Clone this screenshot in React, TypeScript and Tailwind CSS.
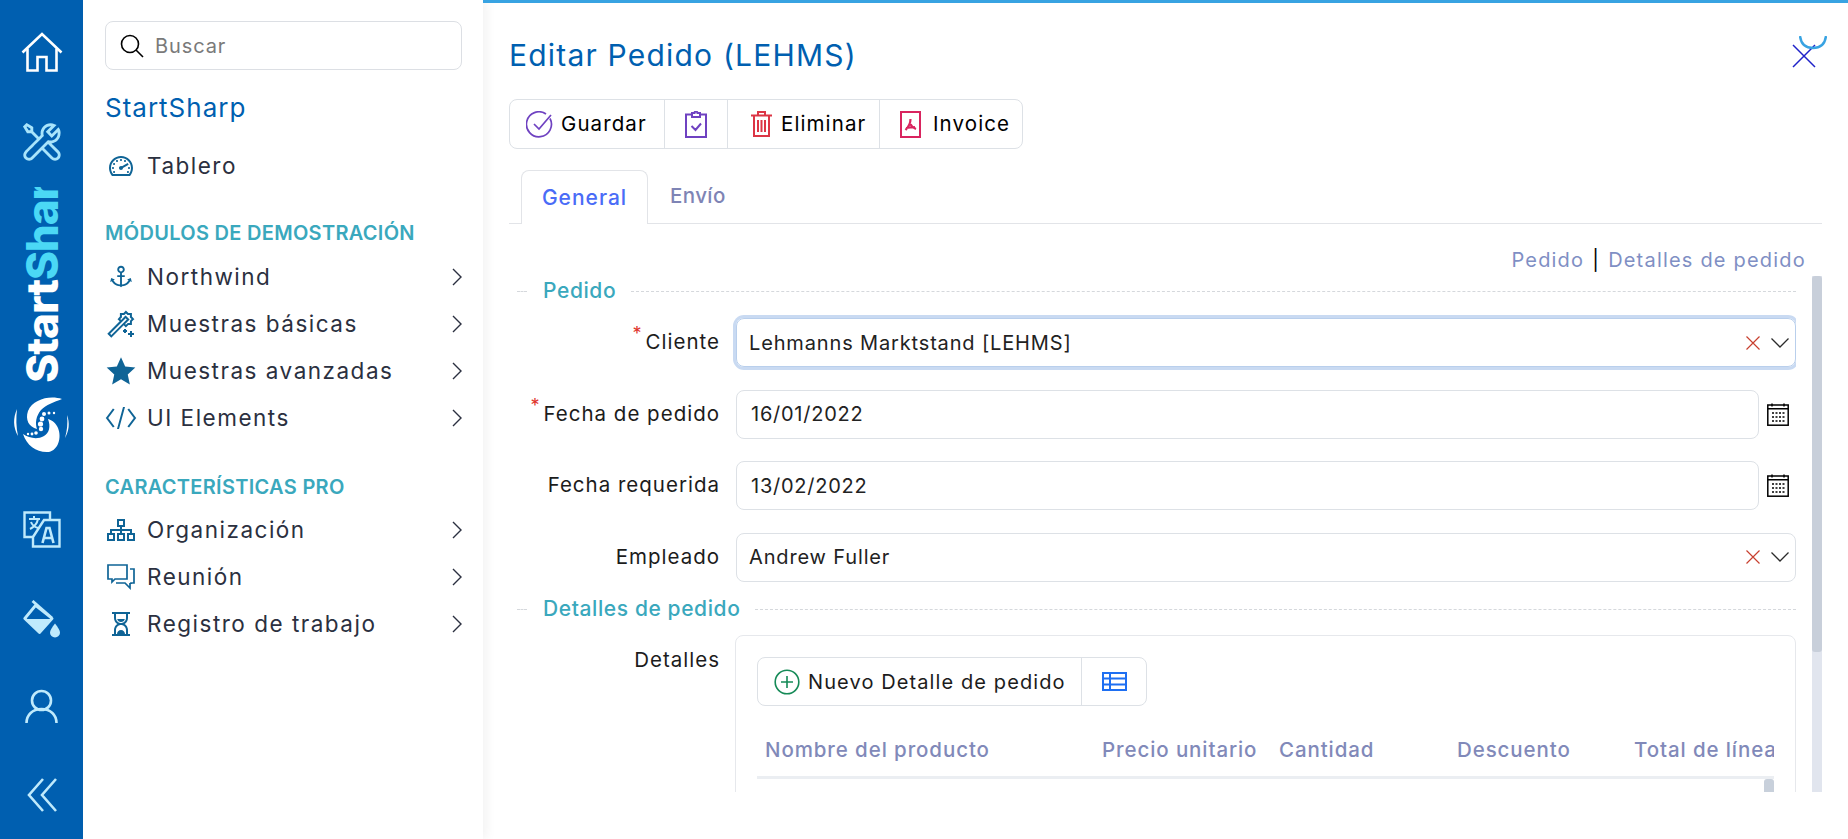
import {
  LiaAnchorSolid,
  LiaMagicSolid,
  LiaStarSolid,
  LiaCodeSolid,
  LiaSitemapSolid,
  LiaHourglassHalfSolid,
  LiaTachometerAltSolid,
  LiaToolsSolid,
} from "react-icons/lia";
import type { ReactNode } from "react";

const Chevron = () => (
  <svg width="10" height="18" viewBox="0 0 10 18" fill="none" stroke="#2b3040" strokeWidth="1.4" className="shrink-0">
    <path d="M1 1l8 8-8 8" />
  </svg>
);

const Comments = () => (
  <svg width="28" height="26" viewBox="0 0 28 26" fill="none" stroke="#0f6496" strokeWidth="1.7">
    <path d="M1 1h19v14H8l-3 3v-3H1z" />
    <path d="M23 5h4v14h-3v1M9 19h9l5 5v-5" />
  </svg>
);

function MenuItem({ icon, label, arrow = true }: { icon: ReactNode; label: string; arrow?: boolean }) {
  return (
    <div className="flex h-[47px] items-center">
      <div className="flex w-[32px] justify-center text-[#0f6496]">{icon}</div>
      <span className="ml-[10px] flex-1 text-[22.500px] tracking-[1.500px] text-[#2b3040]">{label}</span>
      {arrow && <Chevron />}
    </div>
  );
}

function Rail() {
  return (
    <aside className="flex h-full w-[83px] shrink-0 flex-col items-center bg-[#005fb0]">
      <svg width="42" height="40" viewBox="0 0 42 40" fill="none" stroke="#fff" strokeWidth="2.6" className="mt-[32px]">
        <path d="M1.5 20.5L21 2l19.5 18.5" />
        <path d="M6.5 16.5V38.5h10V25h9v13.5h10V16.5" />
      </svg>
      <LiaToolsSolid size={46} color="#a8e4fb" className="mt-[47px]" />
      <div className="mt-[22px] flex h-[196px] flex-col justify-end overflow-hidden">
        <div className="rotate-180 whitespace-nowrap text-[44px] font-extrabold leading-[46px] tracking-[-1.100px] [writing-mode:vertical-rl]">
          <span className="text-white">Start</span>
          <span className="text-[#4bd8f5]">Sharp</span>
        </div>
      </div>
      <svg width="64" height="66" viewBox="0 0 64 66" fill="#fff" className="mt-[8px]">
        <path d="M52 8C40 4 23 8 18 20c-3 9 1 16 9 18-2-6-1-13 4-19 5-5 13-8 21-11z" />
        <path d="M13 43c4 12 14 19 26 18 9-2 13-14 9-24-2-5-6-8-10-9 3 8 1 14-4 17-7 4-15 2-21-2z" />
        <path d="M7 18C3 27 3 36 8 45 6 36 6 27 7 18zM57 24c3 8 2 16-2 23 2-7 3-15 2-23z" />
        <circle cx="34" cy="23" r="2" />
        <circle cx="39" cy="22" r="1.500" />
        <circle cx="44" cy="22" r="1.200" />
        <circle cx="32" cy="28" r="2.400" />
        <circle cx="30.500" cy="33" r="2.600" />
        <circle cx="31" cy="38" r="2.200" />
        <circle cx="26" cy="42" r="1.800" />
        <circle cx="22" cy="43" r="1.400" />
        <circle cx="18" cy="43" r="1.200" />
      </svg>
      <svg width="38" height="37" viewBox="0 0 38 37" fill="none" stroke="#bfeafc" strokeWidth="2.4" className="mt-[54px]">
        <path d="M27 9V1.500H1.500V26H10" />
        <path d="M10 26L21 9h15.500v26.500H10z" />
        <path d="M6 8h11M11 5v3M15 8c-1 5-4 8-8 10M8 11c1 3 4 5 7 6" strokeWidth="2" />
        <path d="M19.500 32l4-15h3l4 15M21.500 27h7" strokeWidth="2.600" />
      </svg>
      <svg width="38" height="38" viewBox="0 0 38 38" className="mt-[52px]">
        <path d="M9.500 1L29 18" fill="none" stroke="#bfeafc" strokeWidth="2.800" />
        <path d="M12.500 5.500L1.800 18.500 16.500 32.500 29 18.500z" fill="none" stroke="#bfeafc" strokeWidth="2.800" strokeLinejoin="round" />
        <path d="M3 19h25L16.500 33z" fill="#bfeafc" />
        <path d="M32 23.500c-3 4-5 7-5 9a5 5 0 0 0 10 0c0-2-2-5-5-9z" fill="#bfeafc" />
      </svg>
      <svg width="33" height="35" viewBox="0 0 33 35" fill="none" stroke="#bfeafc" strokeWidth="2.6" className="mt-[51px]">
        <circle cx="16.500" cy="11.500" r="9.500" />
        <path d="M1.500 34c0-8 6-14 15-14s15 6 15 14" />
      </svg>
      <svg width="30" height="34" viewBox="0 0 30 34" fill="none" stroke="#bfeafc" strokeWidth="2.6" className="mt-[54px]">
        <path d="M16 1L2 17l14 16M29 1L15 17l14 16" />
      </svg>
    </aside>
  );
}

function Sidebar() {
  return (
    <nav className="h-full w-[400px] shrink-0 bg-white pl-[22px] pr-[21px] pt-[21px] shadow-[4px_0_10px_rgba(0,0,0,0.05)]">
      <div className="flex h-[49px] items-center rounded-[8px] border border-[#dcdfe4] pl-[14px]">
        <svg width="24" height="24" viewBox="0 0 24 24" fill="none" stroke="#000" strokeWidth="1.6">
          <circle cx="10" cy="10" r="8.500" />
          <path d="M16 16l7 7" />
        </svg>
        <span className="ml-[11px] text-[20px] leading-[28px] tracking-[0.900px] text-[#7a7a7a]">Buscar</span>
      </div>
      <div className="mt-[20px] text-[26px] leading-[36px] tracking-[1px] text-[#005fb0]">StartSharp</div>
      <div className="mt-[16px]">
        <MenuItem icon={<LiaTachometerAltSolid size={32} />} label="Tablero" arrow={false} />
      </div>
      <div className="mt-[30px] h-[28px] text-[20px] font-semibold leading-[28px] tracking-[0.300px] text-[#3aa8bd]">MÓDULOS DE DEMOSTRACIÓN</div>
      <div className="mt-[6px]">
        <MenuItem icon={<LiaAnchorSolid size={30} />} label="Northwind" />
        <MenuItem icon={<LiaMagicSolid size={32} />} label="Muestras básicas" />
        <MenuItem icon={<LiaStarSolid size={32} />} label="Muestras avanzadas" />
        <MenuItem icon={<LiaCodeSolid size={32} />} label="UI Elements" />
      </div>
      <div className="mt-[32px] h-[28px] text-[20px] font-semibold leading-[28px] tracking-[0.300px] text-[#3aa8bd]">CARACTERÍSTICAS PRO</div>
      <div className="mt-[5px]">
        <MenuItem icon={<LiaSitemapSolid size={34} />} label="Organización" />
        <MenuItem icon={<Comments />} label="Reunión" />
        <MenuItem icon={<LiaHourglassHalfSolid size={32} />} label="Registro de trabajo" />
      </div>
    </nav>
  );
}

function ToolButton({ icon, label, className }: { icon: ReactNode; label?: string; className: string }) {
  return (
    <div className={`flex h-full items-center border-r border-[#dde1e6] last:border-r-0 ${className}`}>
      {icon}
      {label && <span className="text-[20.500px] tracking-[1.100px] text-black">{label}</span>}
    </div>
  );
}

function Legend({ children }: { children: ReactNode }) {
  return (
    <div className="flex h-[30px] items-center">
      <div className="w-[10px] border-t border-dashed border-[#d5d8dc]" />
      <span className="ml-[16px] mr-[15px] text-[21px] font-medium tracking-[0.600px] text-[#3aa8bd]">{children}</span>
      <div className="flex-1 border-t border-dashed border-[#d5d8dc]" />
    </div>
  );
}

const RedX = () => (
  <svg width="14" height="14" viewBox="0 0 14 14" stroke="#c8402f" strokeWidth="1.2" fill="none">
    <path d="M.5.5l13 13M13.500.5l-13 13" />
  </svg>
);

const Caret = () => (
  <svg width="18" height="10" viewBox="0 0 18 10" stroke="#2b2b2b" strokeWidth="1.3" fill="none" className="ml-[11px]">
    <path d="M.5.5L9 9 17.500.5" />
  </svg>
);

const Calendar = () => (
  <svg width="22" height="23" viewBox="0 0 22 23" fill="none" stroke="#000" strokeWidth="1.5" className="ml-[8px] shrink-0">
    <rect x=".8" y="2" width="20.400" height="20.200" />
    <path d="M.8 5.800h20.400M5 .5v3M17 .5v3" />
    <path d="M5 10h13M5 14h13M5 18h13" strokeDasharray="2 1.500" strokeWidth="1.6" />
  </svg>
);

function Row({ label, required, children }: { label: string; required?: boolean; children: ReactNode }) {
  return (
    <div className="mb-[22.500px] flex h-[49px] items-center">
      <div className="w-[203px] shrink-0 whitespace-nowrap text-right text-[20.500px] tracking-[1px] text-[#1c1c1c]">
        {required && <sup className="mr-[3px] text-[18px] text-[#e0342c]">*</sup>}
        {label}
      </div>
      <div className="ml-[16px] flex min-w-0 flex-1 items-center">{children}</div>
    </div>
  );
}

function SelectBox({ value, focused }: { value: string; focused?: boolean }) {
  return (
    <div
      className={`flex h-[49px] flex-1 items-center rounded-[8px] border pl-[12px] pr-[6px] ${
        focused ? "border-[#b9cfec] ring-[3px] ring-[#c9daf2]" : "border-[#dde1e6]"
      }`}
    >
      <span className="flex-1 text-[20px] tracking-[0.850px] text-[#222]">{value}</span>
      <RedX />
      <Caret />
    </div>
  );
}

function DateBox({ value }: { value: string }) {
  return (
    <>
      <div className="flex h-[49px] flex-1 items-center rounded-[8px] border border-[#dde1e6] pl-[14px]">
        <span className="text-[20px] tracking-[0.750px] text-[#222]">{value}</span>
      </div>
      <Calendar />
      <div className="w-[7px] shrink-0" />
    </>
  );
}

const columns = [
  { label: "Nombre del producto", width: "w-[337px]" },
  { label: "Precio unitario", width: "w-[177px]" },
  { label: "Cantidad", width: "w-[178px]" },
  { label: "Descuento", width: "w-[177px]" },
  { label: "Total de línea", width: "w-[177px]" },
];

function OrderForm() {
  return (
    <div className="flex h-[516px]">
      <div className="h-full min-w-0 flex-1 overflow-hidden pl-[8px]">
        <Legend>Pedido</Legend>
        <div className="mt-[12px]">
          <Row label="Cliente" required>
            <SelectBox value="Lehmanns Marktstand [LEHMS]" focused />
          </Row>
          <Row label="Fecha de pedido" required>
            <DateBox value="16/01/2022" />
          </Row>
          <Row label="Fecha requerida">
            <DateBox value="13/02/2022" />
          </Row>
          <Row label="Empleado">
            <SelectBox value="Andrew Fuller" />
          </Row>
        </div>
        <div className="-mt-[10px]">
          <Legend>Detalles de pedido</Legend>
        </div>
        <div className="mt-[11px] flex">
          <div className="w-[203px] shrink-0 pt-[10px] text-right text-[20.500px] tracking-[1px] text-[#1c1c1c]">Detalles</div>
          <div className="ml-[15px] h-[300px] min-w-0 flex-1 rounded-[8px] border border-[#e6e8ec] px-[21px] pt-[21px]">
            <div className="flex h-[49px] w-[390px] rounded-[8px] border border-[#dde1e6]">
              <div className="flex w-[324px] items-center border-r border-[#dde1e6] pl-[16px]">
                <svg width="26" height="26" viewBox="0 0 26 26" fill="none" stroke="#158a57" strokeWidth="1.600">
                  <circle cx="13" cy="13" r="11.800" />
                  <path d="M13 7v12M7 13h12" />
                </svg>
                <span className="ml-[8px] whitespace-nowrap text-[20px] tracking-[1.100px] text-[#1c1c1c]">Nuevo Detalle de pedido</span>
              </div>
              <div className="flex flex-1 items-center justify-center">
                <svg width="25" height="19" viewBox="0 0 25 19" fill="none" stroke="#1e6ff2" strokeWidth="2">
                  <rect x="1" y="1" width="23" height="17" />
                  <path d="M1 6.500h23M1 12.500h23M8 1v17" />
                </svg>
              </div>
            </div>
            <div className="mt-[19px] flex h-[51px] items-center overflow-hidden">
              {columns.map((c) => (
                <div key={c.label} className={`shrink-0 whitespace-nowrap pl-[8px] text-[20.500px] font-medium tracking-[0.900px] text-[#8189b9] ${c.width}`}>
                  {c.label}
                </div>
              ))}
            </div>
            <div className="h-[3px] bg-[#ebeef2]" />
            <div className="flex justify-end">
              <div className="h-[40px] w-[10px] rounded-t-[3px] bg-[#c8d0db]" />
            </div>
          </div>
        </div>
      </div>
      <div className="ml-[16px] h-full w-[10px] shrink-0 bg-[#e1e5ee]">
        <div className="h-[376px] rounded-[3px] bg-[#c8cfda]" />
      </div>
    </div>
  );
}

function Editor() {
  return (
    <main className="h-full min-w-0 flex-1 border-t-[3px] border-[#38a3e2] pl-[26px] pr-[26px]">
      <div className="flex h-[96px] items-start justify-between">
        <h1 className="mt-[33px] text-[30px] leading-[38px] tracking-[1.200px] text-[#005fb0]">Editar Pedido (LEHMS)</h1>
        <div className="relative mr-[6px] mt-[41px] h-[24px] w-[24px]">
          <svg width="24" height="24" viewBox="0 0 24 24" stroke="#1f22c9" strokeWidth="1.500" fill="none">
            <path d="M1 1l22 22M23 1L1 23" />
          </svg>
          <svg width="28" height="14" viewBox="0 0 28 14" stroke="#38a3e2" strokeWidth="2.400" fill="none" className="absolute -right-[11px] -top-[8px]">
            <path d="M1 0c1 8 6 12 13 12s12-4 13-12" />
          </svg>
        </div>
      </div>
      <div className="flex h-[50px] w-[514px] rounded-[8px] border border-[#dde1e6]">
        <ToolButton
          className="w-[155px] gap-[8px] pl-[16px]"
          label="Guardar"
          icon={
            <svg width="27" height="27" viewBox="0 0 27 27" fill="none" stroke="#6f42c1" strokeWidth="1.700">
              <path d="M24 7.500A12.500 12.500 0 1 1 20 3" />
              <path d="M8 13l5 5L25 4" />
            </svg>
          }
        />
        <ToolButton
          className="w-[63px] justify-center"
          icon={
            <svg width="22" height="27" viewBox="0 0 22 27" fill="none" stroke="#6f42c1" strokeWidth="2">
              <path d="M7 3.500H1v22.500h20V3.500h-6" />
              <path d="M7 6V2h2.500a1.500 1.500 0 0 1 3 0H15v4zM6.500 15l4 4 5.500-6.500" />
            </svg>
          }
        />
        <ToolButton
          className="w-[152px] gap-[9px] pl-[23px]"
          label="Eliminar"
          icon={
            <svg width="21" height="26" viewBox="0 0 21 26" fill="none" stroke="#dc3545" strokeWidth="2">
              <path d="M0 4.500h21M7 4V1h7v3M3 5v20h15V5M7 9v12M10.500 9v12M14 9v12" />
            </svg>
          }
        />
        <ToolButton
          className="flex-1 gap-[12px] pl-[20px]"
          label="Invoice"
          icon={
            <svg width="21" height="27" viewBox="0 0 21 27" fill="none" stroke="#d9245f" strokeWidth="2">
              <rect x="1" y="1" width="19" height="25" />
              <path d="M10.500 8c0 4-2 8-5 11M10.500 13c1 3 3 4 5.500 5M6 17l9-1" strokeWidth="2.200" />
            </svg>
          }
        />
      </div>
      <div className="mt-[21px] flex h-[54px] border-b border-[#e2e4e8] pl-[12px]">
        <div className="-mb-px flex w-[127px] items-center justify-center rounded-t-[8px] border border-b-0 border-[#e2e4e8] bg-white text-[21px] font-medium tracking-[1px] text-[#4a6cf7]">
          General
        </div>
        <div className="ml-[22px] flex items-center text-[20.500px] font-medium tracking-[0.400px] text-[#7e84b5]">Envío</div>
      </div>
      <div className="flex h-[52px] items-start justify-end pr-[16px] pt-[22px] text-[20px] leading-[28px] tracking-[1.200px] text-[#7f8fc4]">
        Pedido
        <span className="mx-[8px] text-black">|</span>
        Detalles de pedido
      </div>
      <OrderForm />
    </main>
  );
}

export default function App() {
  return (
    <div className="flex h-screen w-full overflow-hidden bg-white font-['Inter',sans-serif]">
      <Rail />
      <Sidebar />
      <Editor />
    </div>
  );
}
